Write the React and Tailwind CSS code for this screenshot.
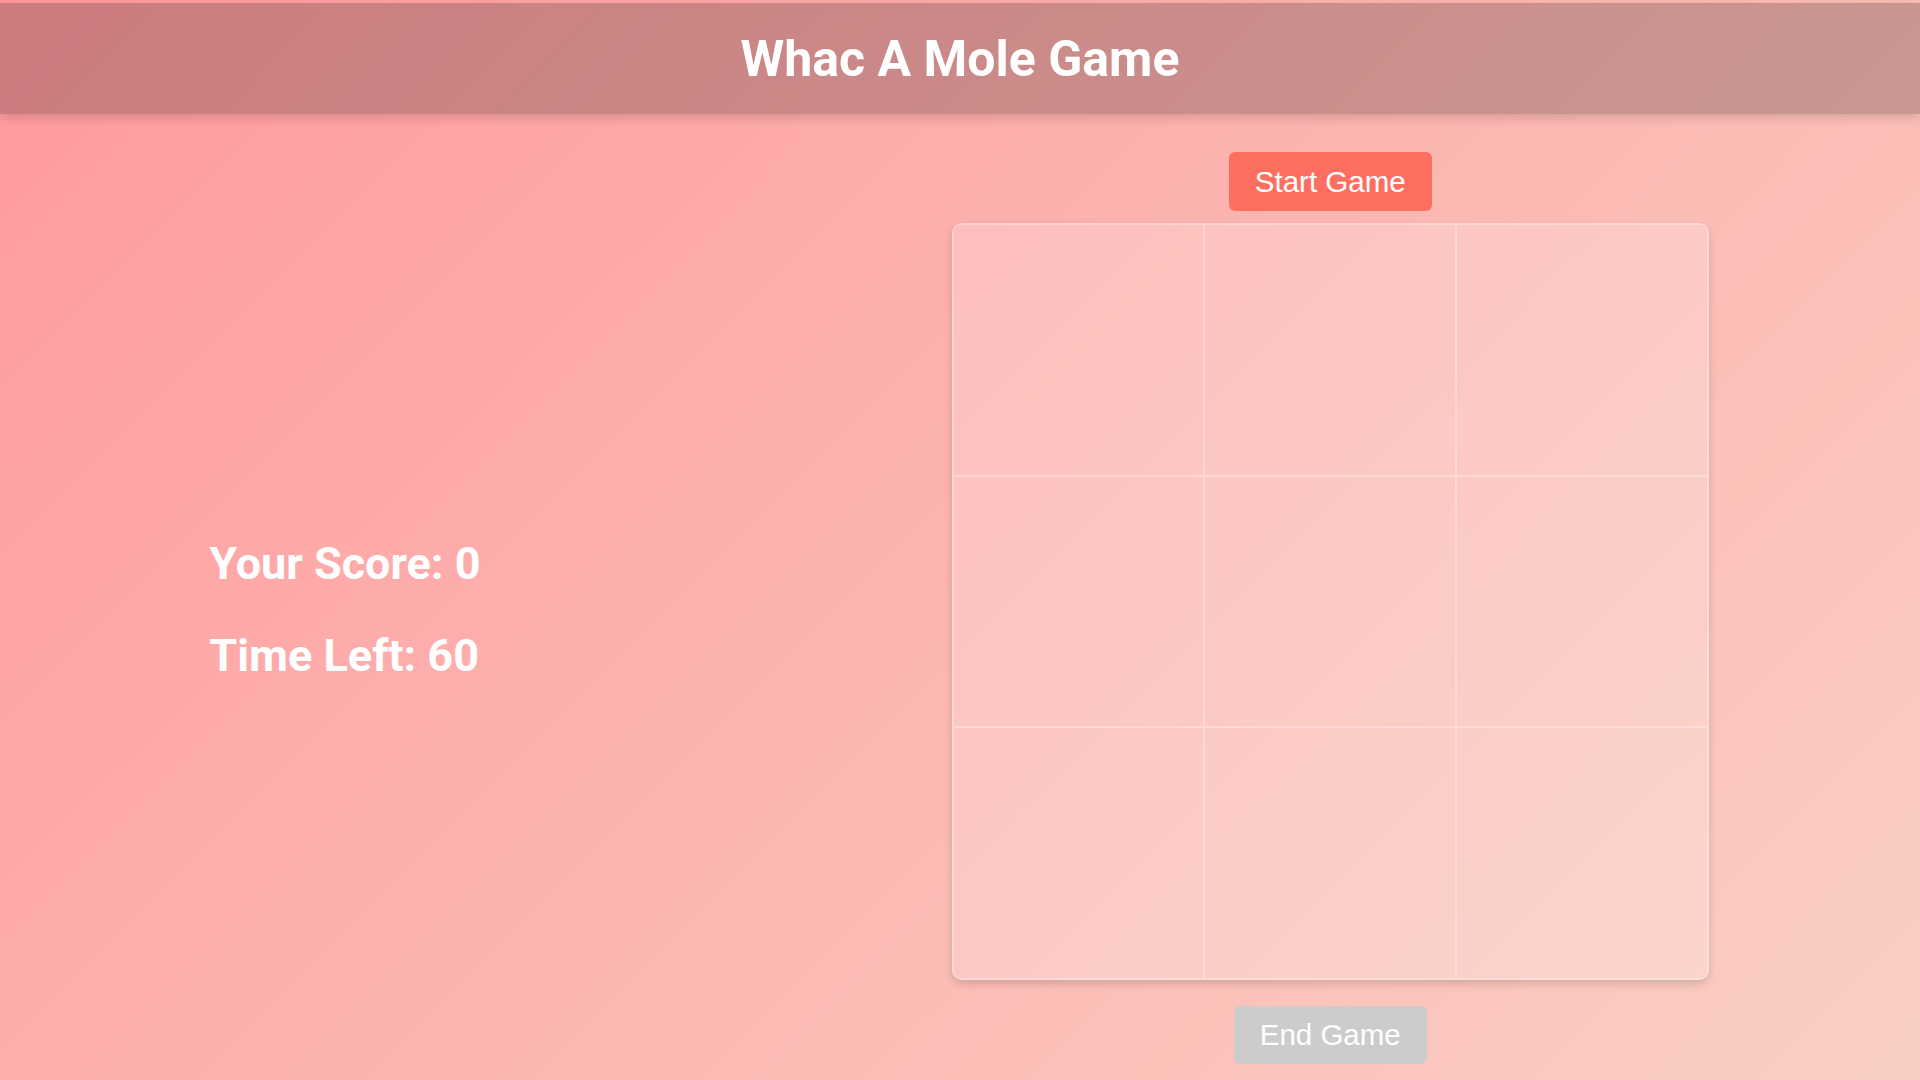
export default function App() {
  const cells = Array.from({ length: 9 });
  return (
    <div className="min-h-screen w-full bg-[linear-gradient(135deg,#ff9a9e_0%,#fad0c4_100%)] pt-[3px] font-['Roboto',sans-serif]">
      <header className="h-[111px] bg-black/20 shadow-[0_4px_10px_rgba(0,0,0,0.15)] flex items-center justify-center">
        <h1 className="text-white font-bold text-[50px] leading-none">Whac A Mole Game</h1>
      </header>
      <main className="flex justify-around items-center pt-[38px] pb-[16px]">
        <div className="w-[318px] pt-[5px] flex flex-col gap-[40px] text-white font-bold text-[45px]">
          <h2 className="leading-[1.172] -ml-[2px]">Your Score: 0</h2>
          <h2 className="leading-[1.172] -ml-[2px]">Time Left: 60</h2>
        </div>
        <div className="flex flex-col items-center">
          <button className="bg-[#ff6f61] text-white rounded-[6px] px-[26px] py-[12.5px] text-[29.5px] leading-[1.149] font-['Liberation_Sans',Arial,sans-serif]">
            Start Game
          </button>
          <div className="mt-[12px] w-[757px] h-[757px] grid grid-cols-3 grid-rows-3 rounded-[10px] overflow-hidden bg-white/20 border border-white/30 shadow-[0_4px_8px_rgba(0,0,0,0.15)]">
            {cells.map((_, i) => (
              <div key={i} className="border border-white/30" />
            ))}
          </div>
          <button className="mt-[26px] bg-[#cccccc] text-white rounded-[6px] px-[26px] py-[12px] text-[29.5px] leading-[1.149] font-['Liberation_Sans',Arial,sans-serif]">
            End Game
          </button>
        </div>
      </main>
    </div>
  );
}
